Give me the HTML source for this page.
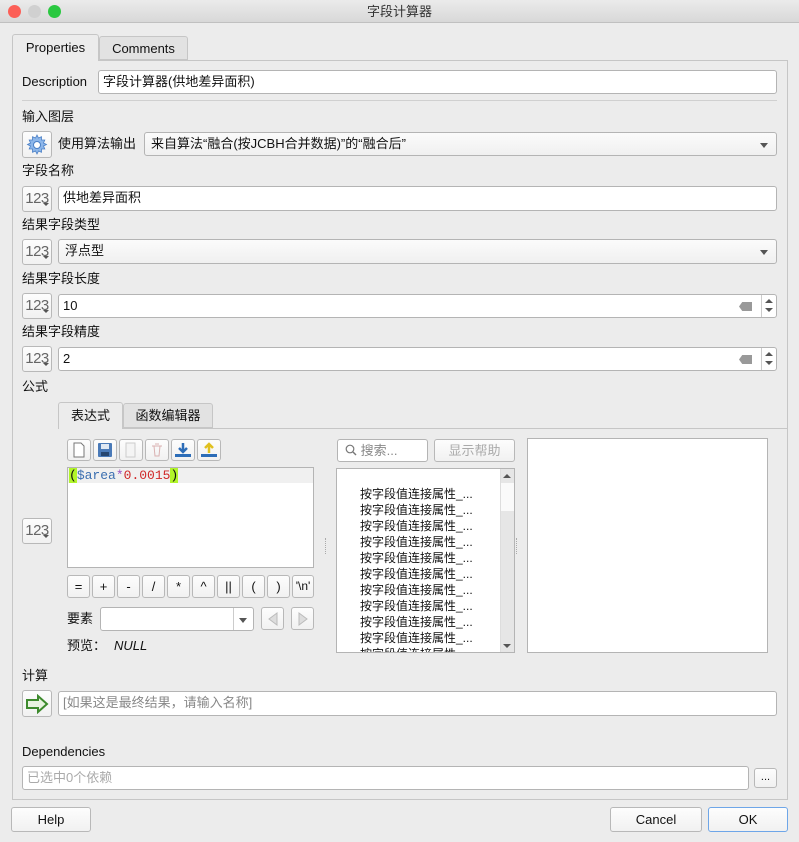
<!DOCTYPE html>
<html><head><meta charset="utf-8"><style>
*{box-sizing:border-box;margin:0;padding:0}
body{width:799px;height:842px;background:#ececec;font-family:"Liberation Sans","Noto Sans CJK SC",sans-serif;font-size:13px;color:#111;position:relative;overflow:hidden}
.a{position:absolute}
.t{position:absolute;white-space:nowrap;line-height:16px}
.in{position:absolute;background:#fff;border:1px solid #b4b4b4;border-radius:3px;padding-left:4px;line-height:22px;white-space:nowrap}
.cb{position:absolute;background:linear-gradient(#fbfbfb,#f0f0f0);border:1px solid #b4b4b4;border-radius:3px;padding-left:6px;line-height:22px;white-space:nowrap}
.cb:after{content:"";position:absolute;right:8px;top:10px;border:4px solid transparent;border-top:5px solid #555}
.btn{position:absolute;background:linear-gradient(#fdfdfd,#f1f1f1);border:1px solid #b8b8b8;border-radius:3px;text-align:center}
.n123{font-size:15px;color:#666;line-height:23px;letter-spacing:-0.5px}
.n123:after{content:"";position:absolute;right:2px;bottom:2px;border:3px solid transparent;border-top:3px solid #555}
.sp{position:absolute;right:0;top:0;width:15px;height:22px;border-left:1px solid #ccc}
.sp:before{content:"";position:absolute;left:3px;top:4px;border:4px solid transparent;border-bottom:4px solid #555;border-top:none}
.sp:after{content:"";position:absolute;left:3px;top:13px;border:4px solid transparent;border-top:4px solid #555;border-bottom:none}
.clr{position:absolute;right:24px;top:7px;width:13px;height:9px;background:#999;clip-path:polygon(25% 0,100% 0,100% 100%,25% 100%,0 50%)}
.li{position:absolute;left:360px;font-size:12px;line-height:16px;white-space:nowrap}
</style></head><body>
<div class="a" style="left:0;top:0;width:799px;height:23px;background:linear-gradient(#ebebeb,#d8d8d8);border-bottom:1px solid #c0c0c0"></div>
<div class="a" style="left:8px;top:5px;width:13px;height:13px;border-radius:50%;background:#fc5f57"></div>
<div class="a" style="left:28px;top:5px;width:13px;height:13px;border-radius:50%;background:#d0d0d0"></div>
<div class="a" style="left:48px;top:5px;width:13px;height:13px;border-radius:50%;background:#2ac840"></div>
<div class="t" style="left:0;width:799px;text-align:center;top:4px;color:#333">字段计算器</div>

<div class="a" style="left:12px;top:60px;width:776px;height:740px;border:1px solid #c6c6c6;background:#ececec"></div>
<div class="a" style="left:12px;top:34px;width:87px;height:27px;border:1px solid #c6c6c6;border-bottom:none;background:#ececec;border-radius:3px 3px 0 0;text-align:center;line-height:26px">Properties</div>
<div class="a" style="left:99px;top:36px;width:89px;height:24px;border:1px solid #c6c6c6;background:#e2e2e2;border-radius:3px 3px 0 0;text-align:center;line-height:24px">Comments</div>

<div class="t" style="left:22px;top:74px">Description</div>
<div class="in" style="left:98px;top:70px;width:679px;height:24px">字段计算器(供地差异面积)</div>
<div class="a" style="left:22px;top:100px;width:755px;height:1px;background:#d0d0d0"></div>

<div class="t" style="left:22px;top:109px">输入图层</div>
<div class="btn" style="left:22px;top:131px;width:30px;height:27px"><svg width="24" height="24" viewBox="0 0 24 24" style="margin-top:1px"><g fill="#8cb6ea" stroke="#4a7fc5" stroke-width=".8"><path d="M12 2l1.5 3 3-1.3 0 3.3 3.3 0-1.3 3 3 1.5-3 1.5 1.3 3-3.3 0 0 3.3-3-1.3-1.5 3-1.5-3-3 1.3 0-3.3-3.3 0 1.3-3-3-1.5 3-1.5-1.3-3 3.3 0 0-3.3 3 1.3z"/></g><circle cx="12" cy="12" r="3.5" fill="#fff" stroke="#4a7fc5"/></svg></div>
<div class="t" style="left:58px;top:136px">使用算法输出</div>
<div class="cb" style="left:144px;top:132px;width:633px;height:24px">来自算法“融合(按JCBH合并数据)”的“融合后”</div>

<div class="t" style="left:22px;top:163px">字段名称</div>
<div class="btn n123" style="left:22px;top:186px;width:30px;height:26px">123</div>
<div class="in" style="left:58px;top:186px;width:719px;height:25px">供地差异面积</div>

<div class="t" style="left:22px;top:217px">结果字段类型</div>
<div class="btn n123" style="left:22px;top:239px;width:30px;height:26px">123</div>
<div class="cb" style="left:58px;top:239px;width:719px;height:25px">浮点型</div>

<div class="t" style="left:22px;top:271px">结果字段长度</div>
<div class="btn n123" style="left:22px;top:293px;width:30px;height:26px">123</div>
<div class="in" style="left:58px;top:294px;width:719px;height:24px">10<div class="clr"></div><div class="sp"></div></div>

<div class="t" style="left:22px;top:324px">结果字段精度</div>
<div class="btn n123" style="left:22px;top:346px;width:30px;height:26px">123</div>
<div class="in" style="left:58px;top:347px;width:719px;height:24px">2<div class="clr"></div><div class="sp"></div></div>

<div class="t" style="left:22px;top:379px">公式</div>
<div class="a" style="left:58px;top:428px;width:730px;height:1px;background:#c6c6c6"></div>
<div class="a" style="left:58px;top:402px;width:65px;height:27px;border:1px solid #c6c6c6;border-bottom:none;background:#ececec;border-radius:3px 3px 0 0;text-align:center;line-height:26px">表达式</div>
<div class="a" style="left:123px;top:403px;width:90px;height:25px;border:1px solid #c6c6c6;background:#e2e2e2;border-radius:3px 3px 0 0;text-align:center;line-height:24px">函数编辑器</div>

<div class="btn" style="left:67px;top:439px;width:24px;height:22px"><svg width="14" height="16" viewBox="0 0 14 16" style="margin-top:2px"><path d="M2 1h7l3 3v11H2z" fill="#fff" stroke="#777"/></svg></div>
<div class="btn" style="left:93px;top:439px;width:24px;height:22px"><svg width="16" height="16" viewBox="0 0 16 16" style="margin-top:2px"><rect x="1" y="1" width="14" height="14" rx="1" fill="#4a7ab8"/><rect x="4" y="2" width="8" height="5" fill="#dfe8f3"/><rect x="4" y="10" width="8" height="4" fill="#27466f"/></svg></div>
<div class="btn" style="left:119px;top:439px;width:24px;height:22px"><svg width="14" height="16" viewBox="0 0 14 16" style="margin-top:2px"><path d="M2 1h9v14H2z" fill="#f4f4f4" stroke="#ccc"/></svg></div>
<div class="btn" style="left:145px;top:439px;width:24px;height:22px"><svg width="14" height="16" viewBox="0 0 14 16" style="margin-top:2px"><path d="M2 4h10M4 4l1 10h4l1-10M5 2h4" fill="none" stroke="#d9b0b0"/></svg></div>
<div class="btn" style="left:171px;top:439px;width:24px;height:22px"><svg width="18" height="16" viewBox="0 0 18 16" style="margin-top:2px"><path d="M9 1v8M5 6l4 4 4-4" stroke="#2d6db8" stroke-width="2.5" fill="none"/><rect x="1" y="12" width="16" height="3" fill="#2d6db8"/></svg></div>
<div class="btn" style="left:197px;top:439px;width:24px;height:22px"><svg width="18" height="16" viewBox="0 0 18 16" style="margin-top:2px"><path d="M9 11V3M5 6l4-4 4 4" stroke="#e0c020" stroke-width="2.5" fill="none"/><rect x="1" y="12" width="16" height="3" fill="#2d6db8"/></svg></div>

<div class="a" style="left:67px;top:467px;width:247px;height:101px;background:#fff;border:1px solid #b4b4b4"></div>
<div class="a" style="left:68px;top:468px;width:245px;height:15px;background:#f0f0f0"></div>
<div class="t" style="left:69px;top:468px;font-family:'Liberation Mono',monospace;font-size:13px;line-height:15px"><span style="background:#b2f52a">(</span><span style="color:#3b6fb0">$area</span><span style="color:#9a50c0">*</span><span style="color:#d02828">0.0015</span><span style="background:#b2f52a">)</span></div>
<div class="btn n123" style="left:22px;top:518px;width:30px;height:26px">123</div>

<div class="btn" style="left:67px;top:575px;width:23px;height:23px;line-height:21px">=</div>
<div class="btn" style="left:92px;top:575px;width:23px;height:23px;line-height:21px">+</div>
<div class="btn" style="left:117px;top:575px;width:23px;height:23px;line-height:21px">-</div>
<div class="btn" style="left:142px;top:575px;width:23px;height:23px;line-height:21px">/</div>
<div class="btn" style="left:167px;top:575px;width:23px;height:23px;line-height:21px">*</div>
<div class="btn" style="left:192px;top:575px;width:23px;height:23px;line-height:21px">^</div>
<div class="btn" style="left:217px;top:575px;width:23px;height:23px;line-height:21px">||</div>
<div class="btn" style="left:242px;top:575px;width:23px;height:23px;line-height:21px">(</div>
<div class="btn" style="left:267px;top:575px;width:23px;height:23px;line-height:21px">)</div>
<div class="btn" style="left:292px;top:575px;width:22px;height:23px;line-height:21px;font-size:12px">'\n'</div>

<div class="t" style="left:67px;top:611px">要素</div>
<div class="in" style="left:100px;top:607px;width:154px;height:24px"><div style="position:absolute;right:0;top:0;width:20px;height:22px;border-left:1px solid #ccc"></div><div style="position:absolute;right:6px;top:10px;border:4px solid transparent;border-top:5px solid #555"></div></div>
<div class="btn" style="left:261px;top:607px;width:23px;height:23px"><svg width="12" height="14" viewBox="0 0 12 14" style="margin-top:4px"><path d="M10 1L2 7l8 6z" fill="#ddd" stroke="#bbb"/></svg></div>
<div class="btn" style="left:291px;top:607px;width:23px;height:23px"><svg width="12" height="14" viewBox="0 0 12 14" style="margin-top:4px"><path d="M2 1l8 6-8 6z" fill="#ddd" stroke="#bbb"/></svg></div>
<div class="t" style="left:67px;top:638px">预览：</div>
<div class="t" style="left:114px;top:638px;font-style:italic">NULL</div>

<div class="a" style="left:325px;top:538px;width:1px;height:16px;border-left:1px dotted #aaa"></div>
<div class="a" style="left:516px;top:538px;width:1px;height:16px;border-left:1px dotted #aaa"></div>

<div class="in" style="left:337px;top:439px;width:91px;height:23px;color:#888;padding-left:7px;line-height:21px"><svg width="12" height="12" viewBox="0 0 12 12" style="vertical-align:-1px"><circle cx="5" cy="5" r="3.8" fill="none" stroke="#777" stroke-width="1.2"/><path d="M8 8l3 3" stroke="#777" stroke-width="1.4"/></svg> 搜索...</div>
<div class="btn" style="left:434px;top:439px;width:81px;height:23px;line-height:21px;color:#aaa">显示帮助</div>
<div class="a" style="left:336px;top:468px;width:179px;height:185px;background:#fff;border:1px solid #b4b4b4;overflow:hidden">
<div class="a" style="left:163px;top:0;width:14px;height:183px;background:#e6e6e6;border-left:1px solid #ddd"></div>
<div class="a" style="left:164px;top:14px;width:13px;height:28px;background:#fafafa"></div>
<div class="a" style="left:166px;top:5px;border:4px solid transparent;border-bottom:4px solid #555;border-top:none"></div>
<div class="a" style="left:166px;top:175px;border:4px solid transparent;border-top:4px solid #555;border-bottom:none"></div>
</div>
<div class="li" style="top:486px">按字段值连接属性_...</div>
<div class="li" style="top:502px">按字段值连接属性_...</div>
<div class="li" style="top:518px">按字段值连接属性_...</div>
<div class="li" style="top:534px">按字段值连接属性_...</div>
<div class="li" style="top:550px">按字段值连接属性_...</div>
<div class="li" style="top:566px">按字段值连接属性_...</div>
<div class="li" style="top:582px">按字段值连接属性_...</div>
<div class="li" style="top:598px">按字段值连接属性_...</div>
<div class="li" style="top:614px">按字段值连接属性_...</div>
<div class="li" style="top:630px">按字段值连接属性_...</div>
<div class="a" style="left:337px;top:646px;width:160px;height:6px;overflow:hidden"><div class="li" style="left:23px;top:0">按字段值连接属性_...</div></div>
<div class="a" style="left:527px;top:438px;width:241px;height:215px;background:#fff;border:1px solid #b4b4b4"></div>

<div class="t" style="left:22px;top:668px">计算</div>
<div class="btn" style="left:22px;top:690px;width:30px;height:27px"><svg width="24" height="20" viewBox="0 0 24 20" style="margin-top:3px"><path d="M2 6h11V2l9 8-9 8v-4H2z" fill="#e8f3e0" stroke="#3d8a2d" stroke-width="2"/></svg></div>
<div class="in" style="left:58px;top:691px;width:719px;height:25px;color:#888">[如果这是最终结果，请输入名称]</div>

<div class="t" style="left:22px;top:744px">Dependencies</div>
<div class="in" style="left:22px;top:766px;width:727px;height:24px;color:#aaa">已选中0个依赖</div>
<div class="btn" style="left:754px;top:768px;width:23px;height:20px;line-height:16px;font-size:11px">...</div>

<div class="btn" style="left:11px;top:807px;width:80px;height:25px;line-height:23px">Help</div>
<div class="btn" style="left:610px;top:807px;width:92px;height:25px;line-height:23px">Cancel</div>
<div class="btn" style="left:708px;top:807px;width:80px;height:25px;line-height:23px;border-color:#6ea6e8">OK</div>
</body></html>
